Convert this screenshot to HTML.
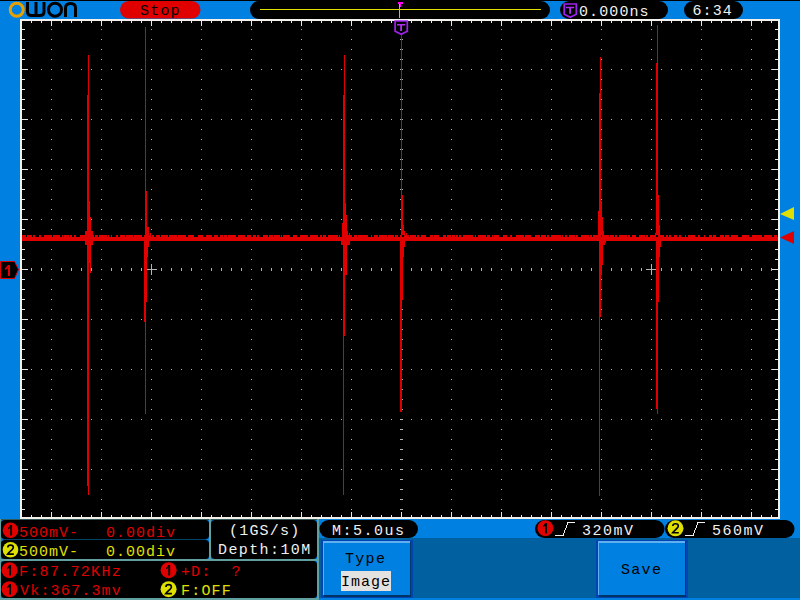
<!DOCTYPE html>
<html><head><meta charset="utf-8">
<style>
html,body{margin:0;padding:0;width:800px;height:600px;overflow:hidden;background:#0080e0;}
svg{position:absolute;left:0;top:0;display:block}
text{font-family:"Liberation Mono",monospace;font-size:15px;}
</style></head><body>
<svg width="800" height="600" viewBox="0 0 800 600" shape-rendering="crispEdges">
<rect x="0" y="0" width="800" height="600" fill="#0080e0"/>
<rect x="0" y="0" width="800" height="1" fill="#000"/>
<rect x="20" y="19" width="760" height="500" fill="#f4f0ec"/>
<rect x="22" y="21" width="756" height="496" fill="#000"/>
<path d="M31 21h1v2h-1zM31 515h1v2h-1zM41 21h1v2h-1zM41 515h1v2h-1zM51 21h1v5h-1zM51 512h1v5h-1zM61 21h1v2h-1zM61 515h1v2h-1zM71 21h1v2h-1zM71 515h1v2h-1zM81 21h1v2h-1zM81 515h1v2h-1zM91 21h1v2h-1zM91 515h1v2h-1zM101 21h1v5h-1zM101 512h1v5h-1zM111 21h1v2h-1zM111 515h1v2h-1zM121 21h1v2h-1zM121 515h1v2h-1zM131 21h1v2h-1zM131 515h1v2h-1zM141 21h1v2h-1zM141 515h1v2h-1zM151 21h1v5h-1zM151 512h1v5h-1zM161 21h1v2h-1zM161 515h1v2h-1zM171 21h1v2h-1zM171 515h1v2h-1zM181 21h1v2h-1zM181 515h1v2h-1zM191 21h1v2h-1zM191 515h1v2h-1zM201 21h1v5h-1zM201 512h1v5h-1zM211 21h1v2h-1zM211 515h1v2h-1zM221 21h1v2h-1zM221 515h1v2h-1zM231 21h1v2h-1zM231 515h1v2h-1zM241 21h1v2h-1zM241 515h1v2h-1zM251 21h1v5h-1zM251 512h1v5h-1zM261 21h1v2h-1zM261 515h1v2h-1zM271 21h1v2h-1zM271 515h1v2h-1zM281 21h1v2h-1zM281 515h1v2h-1zM291 21h1v2h-1zM291 515h1v2h-1zM301 21h1v5h-1zM301 512h1v5h-1zM311 21h1v2h-1zM311 515h1v2h-1zM321 21h1v2h-1zM321 515h1v2h-1zM331 21h1v2h-1zM331 515h1v2h-1zM341 21h1v2h-1zM341 515h1v2h-1zM351 21h1v5h-1zM351 512h1v5h-1zM361 21h1v2h-1zM361 515h1v2h-1zM371 21h1v2h-1zM371 515h1v2h-1zM381 21h1v2h-1zM381 515h1v2h-1zM391 21h1v2h-1zM391 515h1v2h-1zM401 21h1v5h-1zM401 512h1v5h-1zM411 21h1v2h-1zM411 515h1v2h-1zM421 21h1v2h-1zM421 515h1v2h-1zM431 21h1v2h-1zM431 515h1v2h-1zM441 21h1v2h-1zM441 515h1v2h-1zM451 21h1v5h-1zM451 512h1v5h-1zM461 21h1v2h-1zM461 515h1v2h-1zM471 21h1v2h-1zM471 515h1v2h-1zM481 21h1v2h-1zM481 515h1v2h-1zM491 21h1v2h-1zM491 515h1v2h-1zM501 21h1v5h-1zM501 512h1v5h-1zM511 21h1v2h-1zM511 515h1v2h-1zM521 21h1v2h-1zM521 515h1v2h-1zM531 21h1v2h-1zM531 515h1v2h-1zM541 21h1v2h-1zM541 515h1v2h-1zM551 21h1v5h-1zM551 512h1v5h-1zM561 21h1v2h-1zM561 515h1v2h-1zM571 21h1v2h-1zM571 515h1v2h-1zM581 21h1v2h-1zM581 515h1v2h-1zM591 21h1v2h-1zM591 515h1v2h-1zM601 21h1v5h-1zM601 512h1v5h-1zM611 21h1v2h-1zM611 515h1v2h-1zM621 21h1v2h-1zM621 515h1v2h-1zM631 21h1v2h-1zM631 515h1v2h-1zM641 21h1v2h-1zM641 515h1v2h-1zM651 21h1v5h-1zM651 512h1v5h-1zM661 21h1v2h-1zM661 515h1v2h-1zM671 21h1v2h-1zM671 515h1v2h-1zM681 21h1v2h-1zM681 515h1v2h-1zM691 21h1v2h-1zM691 515h1v2h-1zM701 21h1v5h-1zM701 512h1v5h-1zM711 21h1v2h-1zM711 515h1v2h-1zM721 21h1v2h-1zM721 515h1v2h-1zM731 21h1v2h-1zM731 515h1v2h-1zM741 21h1v2h-1zM741 515h1v2h-1zM751 21h1v5h-1zM751 512h1v5h-1zM761 21h1v2h-1zM761 515h1v2h-1zM771 21h1v2h-1zM771 515h1v2h-1zM22 29h3v1h-3zM775 29h3v1h-3zM22 39h3v1h-3zM775 39h3v1h-3zM22 49h3v1h-3zM775 49h3v1h-3zM22 59h3v1h-3zM775 59h3v1h-3zM22 69h6v1h-6zM772 69h6v1h-6zM22 79h3v1h-3zM775 79h3v1h-3zM22 89h3v1h-3zM775 89h3v1h-3zM22 99h3v1h-3zM775 99h3v1h-3zM22 109h3v1h-3zM775 109h3v1h-3zM22 119h6v1h-6zM772 119h6v1h-6zM22 129h3v1h-3zM775 129h3v1h-3zM22 139h3v1h-3zM775 139h3v1h-3zM22 149h3v1h-3zM775 149h3v1h-3zM22 159h3v1h-3zM775 159h3v1h-3zM22 169h6v1h-6zM772 169h6v1h-6zM22 179h3v1h-3zM775 179h3v1h-3zM22 189h3v1h-3zM775 189h3v1h-3zM22 199h3v1h-3zM775 199h3v1h-3zM22 209h3v1h-3zM775 209h3v1h-3zM22 219h6v1h-6zM772 219h6v1h-6zM22 229h3v1h-3zM775 229h3v1h-3zM22 239h3v1h-3zM775 239h3v1h-3zM22 249h3v1h-3zM775 249h3v1h-3zM22 259h3v1h-3zM775 259h3v1h-3zM22 269h6v1h-6zM772 269h6v1h-6zM22 279h3v1h-3zM775 279h3v1h-3zM22 289h3v1h-3zM775 289h3v1h-3zM22 299h3v1h-3zM775 299h3v1h-3zM22 309h3v1h-3zM775 309h3v1h-3zM22 319h6v1h-6zM772 319h6v1h-6zM22 329h3v1h-3zM775 329h3v1h-3zM22 339h3v1h-3zM775 339h3v1h-3zM22 349h3v1h-3zM775 349h3v1h-3zM22 359h3v1h-3zM775 359h3v1h-3zM22 369h6v1h-6zM772 369h6v1h-6zM22 379h3v1h-3zM775 379h3v1h-3zM22 389h3v1h-3zM775 389h3v1h-3zM22 399h3v1h-3zM775 399h3v1h-3zM22 409h3v1h-3zM775 409h3v1h-3zM22 419h6v1h-6zM772 419h6v1h-6zM22 429h3v1h-3zM775 429h3v1h-3zM22 439h3v1h-3zM775 439h3v1h-3zM22 449h3v1h-3zM775 449h3v1h-3zM22 459h3v1h-3zM775 459h3v1h-3zM22 469h6v1h-6zM772 469h6v1h-6zM22 479h3v1h-3zM775 479h3v1h-3zM22 489h3v1h-3zM775 489h3v1h-3zM22 499h3v1h-3zM775 499h3v1h-3zM22 509h3v1h-3zM775 509h3v1h-3z" fill="#e8e8e8"/>
<path d="M51 29h1v1h-1zM51 39h1v1h-1zM51 49h1v1h-1zM51 59h1v1h-1zM51 69h1v1h-1zM51 79h1v1h-1zM51 89h1v1h-1zM51 99h1v1h-1zM51 109h1v1h-1zM51 119h1v1h-1zM51 129h1v1h-1zM51 139h1v1h-1zM51 149h1v1h-1zM51 159h1v1h-1zM51 169h1v1h-1zM51 179h1v1h-1zM51 189h1v1h-1zM51 199h1v1h-1zM51 209h1v1h-1zM51 219h1v1h-1zM51 229h1v1h-1zM51 239h1v1h-1zM51 249h1v1h-1zM51 259h1v1h-1zM51 269h1v1h-1zM51 279h1v1h-1zM51 289h1v1h-1zM51 299h1v1h-1zM51 309h1v1h-1zM51 319h1v1h-1zM51 329h1v1h-1zM51 339h1v1h-1zM51 349h1v1h-1zM51 359h1v1h-1zM51 369h1v1h-1zM51 379h1v1h-1zM51 389h1v1h-1zM51 399h1v1h-1zM51 409h1v1h-1zM51 419h1v1h-1zM51 429h1v1h-1zM51 439h1v1h-1zM51 449h1v1h-1zM51 459h1v1h-1zM51 469h1v1h-1zM51 479h1v1h-1zM51 489h1v1h-1zM51 499h1v1h-1zM51 509h1v1h-1zM101 29h1v1h-1zM101 39h1v1h-1zM101 49h1v1h-1zM101 59h1v1h-1zM101 69h1v1h-1zM101 79h1v1h-1zM101 89h1v1h-1zM101 99h1v1h-1zM101 109h1v1h-1zM101 119h1v1h-1zM101 129h1v1h-1zM101 139h1v1h-1zM101 149h1v1h-1zM101 159h1v1h-1zM101 169h1v1h-1zM101 179h1v1h-1zM101 189h1v1h-1zM101 199h1v1h-1zM101 209h1v1h-1zM101 219h1v1h-1zM101 229h1v1h-1zM101 239h1v1h-1zM101 249h1v1h-1zM101 259h1v1h-1zM101 269h1v1h-1zM101 279h1v1h-1zM101 289h1v1h-1zM101 299h1v1h-1zM101 309h1v1h-1zM101 319h1v1h-1zM101 329h1v1h-1zM101 339h1v1h-1zM101 349h1v1h-1zM101 359h1v1h-1zM101 369h1v1h-1zM101 379h1v1h-1zM101 389h1v1h-1zM101 399h1v1h-1zM101 409h1v1h-1zM101 419h1v1h-1zM101 429h1v1h-1zM101 439h1v1h-1zM101 449h1v1h-1zM101 459h1v1h-1zM101 469h1v1h-1zM101 479h1v1h-1zM101 489h1v1h-1zM101 499h1v1h-1zM101 509h1v1h-1zM151 29h1v1h-1zM151 39h1v1h-1zM151 49h1v1h-1zM151 59h1v1h-1zM151 69h1v1h-1zM151 79h1v1h-1zM151 89h1v1h-1zM151 99h1v1h-1zM151 109h1v1h-1zM151 119h1v1h-1zM151 129h1v1h-1zM151 139h1v1h-1zM151 149h1v1h-1zM151 159h1v1h-1zM151 169h1v1h-1zM151 179h1v1h-1zM151 189h1v1h-1zM151 199h1v1h-1zM151 209h1v1h-1zM151 219h1v1h-1zM151 229h1v1h-1zM151 239h1v1h-1zM151 249h1v1h-1zM151 259h1v1h-1zM151 269h1v1h-1zM151 279h1v1h-1zM151 289h1v1h-1zM151 299h1v1h-1zM151 309h1v1h-1zM151 319h1v1h-1zM151 329h1v1h-1zM151 339h1v1h-1zM151 349h1v1h-1zM151 359h1v1h-1zM151 369h1v1h-1zM151 379h1v1h-1zM151 389h1v1h-1zM151 399h1v1h-1zM151 409h1v1h-1zM151 419h1v1h-1zM151 429h1v1h-1zM151 439h1v1h-1zM151 449h1v1h-1zM151 459h1v1h-1zM151 469h1v1h-1zM151 479h1v1h-1zM151 489h1v1h-1zM151 499h1v1h-1zM151 509h1v1h-1zM201 29h1v1h-1zM201 39h1v1h-1zM201 49h1v1h-1zM201 59h1v1h-1zM201 69h1v1h-1zM201 79h1v1h-1zM201 89h1v1h-1zM201 99h1v1h-1zM201 109h1v1h-1zM201 119h1v1h-1zM201 129h1v1h-1zM201 139h1v1h-1zM201 149h1v1h-1zM201 159h1v1h-1zM201 169h1v1h-1zM201 179h1v1h-1zM201 189h1v1h-1zM201 199h1v1h-1zM201 209h1v1h-1zM201 219h1v1h-1zM201 229h1v1h-1zM201 239h1v1h-1zM201 249h1v1h-1zM201 259h1v1h-1zM201 269h1v1h-1zM201 279h1v1h-1zM201 289h1v1h-1zM201 299h1v1h-1zM201 309h1v1h-1zM201 319h1v1h-1zM201 329h1v1h-1zM201 339h1v1h-1zM201 349h1v1h-1zM201 359h1v1h-1zM201 369h1v1h-1zM201 379h1v1h-1zM201 389h1v1h-1zM201 399h1v1h-1zM201 409h1v1h-1zM201 419h1v1h-1zM201 429h1v1h-1zM201 439h1v1h-1zM201 449h1v1h-1zM201 459h1v1h-1zM201 469h1v1h-1zM201 479h1v1h-1zM201 489h1v1h-1zM201 499h1v1h-1zM201 509h1v1h-1zM251 29h1v1h-1zM251 39h1v1h-1zM251 49h1v1h-1zM251 59h1v1h-1zM251 69h1v1h-1zM251 79h1v1h-1zM251 89h1v1h-1zM251 99h1v1h-1zM251 109h1v1h-1zM251 119h1v1h-1zM251 129h1v1h-1zM251 139h1v1h-1zM251 149h1v1h-1zM251 159h1v1h-1zM251 169h1v1h-1zM251 179h1v1h-1zM251 189h1v1h-1zM251 199h1v1h-1zM251 209h1v1h-1zM251 219h1v1h-1zM251 229h1v1h-1zM251 239h1v1h-1zM251 249h1v1h-1zM251 259h1v1h-1zM251 269h1v1h-1zM251 279h1v1h-1zM251 289h1v1h-1zM251 299h1v1h-1zM251 309h1v1h-1zM251 319h1v1h-1zM251 329h1v1h-1zM251 339h1v1h-1zM251 349h1v1h-1zM251 359h1v1h-1zM251 369h1v1h-1zM251 379h1v1h-1zM251 389h1v1h-1zM251 399h1v1h-1zM251 409h1v1h-1zM251 419h1v1h-1zM251 429h1v1h-1zM251 439h1v1h-1zM251 449h1v1h-1zM251 459h1v1h-1zM251 469h1v1h-1zM251 479h1v1h-1zM251 489h1v1h-1zM251 499h1v1h-1zM251 509h1v1h-1zM301 29h1v1h-1zM301 39h1v1h-1zM301 49h1v1h-1zM301 59h1v1h-1zM301 69h1v1h-1zM301 79h1v1h-1zM301 89h1v1h-1zM301 99h1v1h-1zM301 109h1v1h-1zM301 119h1v1h-1zM301 129h1v1h-1zM301 139h1v1h-1zM301 149h1v1h-1zM301 159h1v1h-1zM301 169h1v1h-1zM301 179h1v1h-1zM301 189h1v1h-1zM301 199h1v1h-1zM301 209h1v1h-1zM301 219h1v1h-1zM301 229h1v1h-1zM301 239h1v1h-1zM301 249h1v1h-1zM301 259h1v1h-1zM301 269h1v1h-1zM301 279h1v1h-1zM301 289h1v1h-1zM301 299h1v1h-1zM301 309h1v1h-1zM301 319h1v1h-1zM301 329h1v1h-1zM301 339h1v1h-1zM301 349h1v1h-1zM301 359h1v1h-1zM301 369h1v1h-1zM301 379h1v1h-1zM301 389h1v1h-1zM301 399h1v1h-1zM301 409h1v1h-1zM301 419h1v1h-1zM301 429h1v1h-1zM301 439h1v1h-1zM301 449h1v1h-1zM301 459h1v1h-1zM301 469h1v1h-1zM301 479h1v1h-1zM301 489h1v1h-1zM301 499h1v1h-1zM301 509h1v1h-1zM351 29h1v1h-1zM351 39h1v1h-1zM351 49h1v1h-1zM351 59h1v1h-1zM351 69h1v1h-1zM351 79h1v1h-1zM351 89h1v1h-1zM351 99h1v1h-1zM351 109h1v1h-1zM351 119h1v1h-1zM351 129h1v1h-1zM351 139h1v1h-1zM351 149h1v1h-1zM351 159h1v1h-1zM351 169h1v1h-1zM351 179h1v1h-1zM351 189h1v1h-1zM351 199h1v1h-1zM351 209h1v1h-1zM351 219h1v1h-1zM351 229h1v1h-1zM351 239h1v1h-1zM351 249h1v1h-1zM351 259h1v1h-1zM351 269h1v1h-1zM351 279h1v1h-1zM351 289h1v1h-1zM351 299h1v1h-1zM351 309h1v1h-1zM351 319h1v1h-1zM351 329h1v1h-1zM351 339h1v1h-1zM351 349h1v1h-1zM351 359h1v1h-1zM351 369h1v1h-1zM351 379h1v1h-1zM351 389h1v1h-1zM351 399h1v1h-1zM351 409h1v1h-1zM351 419h1v1h-1zM351 429h1v1h-1zM351 439h1v1h-1zM351 449h1v1h-1zM351 459h1v1h-1zM351 469h1v1h-1zM351 479h1v1h-1zM351 489h1v1h-1zM351 499h1v1h-1zM351 509h1v1h-1zM400 29h3v1h-3zM400 39h3v1h-3zM400 49h3v1h-3zM400 59h3v1h-3zM400 69h3v1h-3zM400 79h3v1h-3zM400 89h3v1h-3zM400 99h3v1h-3zM400 109h3v1h-3zM400 119h3v1h-3zM400 129h3v1h-3zM400 139h3v1h-3zM400 149h3v1h-3zM400 159h3v1h-3zM400 169h3v1h-3zM400 179h3v1h-3zM400 189h3v1h-3zM400 199h3v1h-3zM400 209h3v1h-3zM400 219h3v1h-3zM400 229h3v1h-3zM400 239h3v1h-3zM400 249h3v1h-3zM400 259h3v1h-3zM400 269h3v1h-3zM400 279h3v1h-3zM400 289h3v1h-3zM400 299h3v1h-3zM400 309h3v1h-3zM400 319h3v1h-3zM400 329h3v1h-3zM400 339h3v1h-3zM400 349h3v1h-3zM400 359h3v1h-3zM400 369h3v1h-3zM400 379h3v1h-3zM400 389h3v1h-3zM400 399h3v1h-3zM400 409h3v1h-3zM400 419h3v1h-3zM400 429h3v1h-3zM400 439h3v1h-3zM400 449h3v1h-3zM400 459h3v1h-3zM400 469h3v1h-3zM400 479h3v1h-3zM400 489h3v1h-3zM400 499h3v1h-3zM400 509h3v1h-3zM451 29h1v1h-1zM451 39h1v1h-1zM451 49h1v1h-1zM451 59h1v1h-1zM451 69h1v1h-1zM451 79h1v1h-1zM451 89h1v1h-1zM451 99h1v1h-1zM451 109h1v1h-1zM451 119h1v1h-1zM451 129h1v1h-1zM451 139h1v1h-1zM451 149h1v1h-1zM451 159h1v1h-1zM451 169h1v1h-1zM451 179h1v1h-1zM451 189h1v1h-1zM451 199h1v1h-1zM451 209h1v1h-1zM451 219h1v1h-1zM451 229h1v1h-1zM451 239h1v1h-1zM451 249h1v1h-1zM451 259h1v1h-1zM451 269h1v1h-1zM451 279h1v1h-1zM451 289h1v1h-1zM451 299h1v1h-1zM451 309h1v1h-1zM451 319h1v1h-1zM451 329h1v1h-1zM451 339h1v1h-1zM451 349h1v1h-1zM451 359h1v1h-1zM451 369h1v1h-1zM451 379h1v1h-1zM451 389h1v1h-1zM451 399h1v1h-1zM451 409h1v1h-1zM451 419h1v1h-1zM451 429h1v1h-1zM451 439h1v1h-1zM451 449h1v1h-1zM451 459h1v1h-1zM451 469h1v1h-1zM451 479h1v1h-1zM451 489h1v1h-1zM451 499h1v1h-1zM451 509h1v1h-1zM501 29h1v1h-1zM501 39h1v1h-1zM501 49h1v1h-1zM501 59h1v1h-1zM501 69h1v1h-1zM501 79h1v1h-1zM501 89h1v1h-1zM501 99h1v1h-1zM501 109h1v1h-1zM501 119h1v1h-1zM501 129h1v1h-1zM501 139h1v1h-1zM501 149h1v1h-1zM501 159h1v1h-1zM501 169h1v1h-1zM501 179h1v1h-1zM501 189h1v1h-1zM501 199h1v1h-1zM501 209h1v1h-1zM501 219h1v1h-1zM501 229h1v1h-1zM501 239h1v1h-1zM501 249h1v1h-1zM501 259h1v1h-1zM501 269h1v1h-1zM501 279h1v1h-1zM501 289h1v1h-1zM501 299h1v1h-1zM501 309h1v1h-1zM501 319h1v1h-1zM501 329h1v1h-1zM501 339h1v1h-1zM501 349h1v1h-1zM501 359h1v1h-1zM501 369h1v1h-1zM501 379h1v1h-1zM501 389h1v1h-1zM501 399h1v1h-1zM501 409h1v1h-1zM501 419h1v1h-1zM501 429h1v1h-1zM501 439h1v1h-1zM501 449h1v1h-1zM501 459h1v1h-1zM501 469h1v1h-1zM501 479h1v1h-1zM501 489h1v1h-1zM501 499h1v1h-1zM501 509h1v1h-1zM551 29h1v1h-1zM551 39h1v1h-1zM551 49h1v1h-1zM551 59h1v1h-1zM551 69h1v1h-1zM551 79h1v1h-1zM551 89h1v1h-1zM551 99h1v1h-1zM551 109h1v1h-1zM551 119h1v1h-1zM551 129h1v1h-1zM551 139h1v1h-1zM551 149h1v1h-1zM551 159h1v1h-1zM551 169h1v1h-1zM551 179h1v1h-1zM551 189h1v1h-1zM551 199h1v1h-1zM551 209h1v1h-1zM551 219h1v1h-1zM551 229h1v1h-1zM551 239h1v1h-1zM551 249h1v1h-1zM551 259h1v1h-1zM551 269h1v1h-1zM551 279h1v1h-1zM551 289h1v1h-1zM551 299h1v1h-1zM551 309h1v1h-1zM551 319h1v1h-1zM551 329h1v1h-1zM551 339h1v1h-1zM551 349h1v1h-1zM551 359h1v1h-1zM551 369h1v1h-1zM551 379h1v1h-1zM551 389h1v1h-1zM551 399h1v1h-1zM551 409h1v1h-1zM551 419h1v1h-1zM551 429h1v1h-1zM551 439h1v1h-1zM551 449h1v1h-1zM551 459h1v1h-1zM551 469h1v1h-1zM551 479h1v1h-1zM551 489h1v1h-1zM551 499h1v1h-1zM551 509h1v1h-1zM601 29h1v1h-1zM601 39h1v1h-1zM601 49h1v1h-1zM601 59h1v1h-1zM601 69h1v1h-1zM601 79h1v1h-1zM601 89h1v1h-1zM601 99h1v1h-1zM601 109h1v1h-1zM601 119h1v1h-1zM601 129h1v1h-1zM601 139h1v1h-1zM601 149h1v1h-1zM601 159h1v1h-1zM601 169h1v1h-1zM601 179h1v1h-1zM601 189h1v1h-1zM601 199h1v1h-1zM601 209h1v1h-1zM601 219h1v1h-1zM601 229h1v1h-1zM601 239h1v1h-1zM601 249h1v1h-1zM601 259h1v1h-1zM601 269h1v1h-1zM601 279h1v1h-1zM601 289h1v1h-1zM601 299h1v1h-1zM601 309h1v1h-1zM601 319h1v1h-1zM601 329h1v1h-1zM601 339h1v1h-1zM601 349h1v1h-1zM601 359h1v1h-1zM601 369h1v1h-1zM601 379h1v1h-1zM601 389h1v1h-1zM601 399h1v1h-1zM601 409h1v1h-1zM601 419h1v1h-1zM601 429h1v1h-1zM601 439h1v1h-1zM601 449h1v1h-1zM601 459h1v1h-1zM601 469h1v1h-1zM601 479h1v1h-1zM601 489h1v1h-1zM601 499h1v1h-1zM601 509h1v1h-1zM651 29h1v1h-1zM651 39h1v1h-1zM651 49h1v1h-1zM651 59h1v1h-1zM651 69h1v1h-1zM651 79h1v1h-1zM651 89h1v1h-1zM651 99h1v1h-1zM651 109h1v1h-1zM651 119h1v1h-1zM651 129h1v1h-1zM651 139h1v1h-1zM651 149h1v1h-1zM651 159h1v1h-1zM651 169h1v1h-1zM651 179h1v1h-1zM651 189h1v1h-1zM651 199h1v1h-1zM651 209h1v1h-1zM651 219h1v1h-1zM651 229h1v1h-1zM651 239h1v1h-1zM651 249h1v1h-1zM651 259h1v1h-1zM651 269h1v1h-1zM651 279h1v1h-1zM651 289h1v1h-1zM651 299h1v1h-1zM651 309h1v1h-1zM651 319h1v1h-1zM651 329h1v1h-1zM651 339h1v1h-1zM651 349h1v1h-1zM651 359h1v1h-1zM651 369h1v1h-1zM651 379h1v1h-1zM651 389h1v1h-1zM651 399h1v1h-1zM651 409h1v1h-1zM651 419h1v1h-1zM651 429h1v1h-1zM651 439h1v1h-1zM651 449h1v1h-1zM651 459h1v1h-1zM651 469h1v1h-1zM651 479h1v1h-1zM651 489h1v1h-1zM651 499h1v1h-1zM651 509h1v1h-1zM701 29h1v1h-1zM701 39h1v1h-1zM701 49h1v1h-1zM701 59h1v1h-1zM701 69h1v1h-1zM701 79h1v1h-1zM701 89h1v1h-1zM701 99h1v1h-1zM701 109h1v1h-1zM701 119h1v1h-1zM701 129h1v1h-1zM701 139h1v1h-1zM701 149h1v1h-1zM701 159h1v1h-1zM701 169h1v1h-1zM701 179h1v1h-1zM701 189h1v1h-1zM701 199h1v1h-1zM701 209h1v1h-1zM701 219h1v1h-1zM701 229h1v1h-1zM701 239h1v1h-1zM701 249h1v1h-1zM701 259h1v1h-1zM701 269h1v1h-1zM701 279h1v1h-1zM701 289h1v1h-1zM701 299h1v1h-1zM701 309h1v1h-1zM701 319h1v1h-1zM701 329h1v1h-1zM701 339h1v1h-1zM701 349h1v1h-1zM701 359h1v1h-1zM701 369h1v1h-1zM701 379h1v1h-1zM701 389h1v1h-1zM701 399h1v1h-1zM701 409h1v1h-1zM701 419h1v1h-1zM701 429h1v1h-1zM701 439h1v1h-1zM701 449h1v1h-1zM701 459h1v1h-1zM701 469h1v1h-1zM701 479h1v1h-1zM701 489h1v1h-1zM701 499h1v1h-1zM701 509h1v1h-1zM751 29h1v1h-1zM751 39h1v1h-1zM751 49h1v1h-1zM751 59h1v1h-1zM751 69h1v1h-1zM751 79h1v1h-1zM751 89h1v1h-1zM751 99h1v1h-1zM751 109h1v1h-1zM751 119h1v1h-1zM751 129h1v1h-1zM751 139h1v1h-1zM751 149h1v1h-1zM751 159h1v1h-1zM751 169h1v1h-1zM751 179h1v1h-1zM751 189h1v1h-1zM751 199h1v1h-1zM751 209h1v1h-1zM751 219h1v1h-1zM751 229h1v1h-1zM751 239h1v1h-1zM751 249h1v1h-1zM751 259h1v1h-1zM751 269h1v1h-1zM751 279h1v1h-1zM751 289h1v1h-1zM751 299h1v1h-1zM751 309h1v1h-1zM751 319h1v1h-1zM751 329h1v1h-1zM751 339h1v1h-1zM751 349h1v1h-1zM751 359h1v1h-1zM751 369h1v1h-1zM751 379h1v1h-1zM751 389h1v1h-1zM751 399h1v1h-1zM751 409h1v1h-1zM751 419h1v1h-1zM751 429h1v1h-1zM751 439h1v1h-1zM751 449h1v1h-1zM751 459h1v1h-1zM751 469h1v1h-1zM751 479h1v1h-1zM751 489h1v1h-1zM751 499h1v1h-1zM751 509h1v1h-1zM31 69h1v1h-1zM41 69h1v1h-1zM61 69h1v1h-1zM71 69h1v1h-1zM81 69h1v1h-1zM91 69h1v1h-1zM111 69h1v1h-1zM121 69h1v1h-1zM131 69h1v1h-1zM141 69h1v1h-1zM161 69h1v1h-1zM171 69h1v1h-1zM181 69h1v1h-1zM191 69h1v1h-1zM211 69h1v1h-1zM221 69h1v1h-1zM231 69h1v1h-1zM241 69h1v1h-1zM261 69h1v1h-1zM271 69h1v1h-1zM281 69h1v1h-1zM291 69h1v1h-1zM311 69h1v1h-1zM321 69h1v1h-1zM331 69h1v1h-1zM341 69h1v1h-1zM361 69h1v1h-1zM371 69h1v1h-1zM381 69h1v1h-1zM391 69h1v1h-1zM411 69h1v1h-1zM421 69h1v1h-1zM431 69h1v1h-1zM441 69h1v1h-1zM461 69h1v1h-1zM471 69h1v1h-1zM481 69h1v1h-1zM491 69h1v1h-1zM511 69h1v1h-1zM521 69h1v1h-1zM531 69h1v1h-1zM541 69h1v1h-1zM561 69h1v1h-1zM571 69h1v1h-1zM581 69h1v1h-1zM591 69h1v1h-1zM611 69h1v1h-1zM621 69h1v1h-1zM631 69h1v1h-1zM641 69h1v1h-1zM661 69h1v1h-1zM671 69h1v1h-1zM681 69h1v1h-1zM691 69h1v1h-1zM711 69h1v1h-1zM721 69h1v1h-1zM731 69h1v1h-1zM741 69h1v1h-1zM761 69h1v1h-1zM771 69h1v1h-1zM31 119h1v1h-1zM41 119h1v1h-1zM61 119h1v1h-1zM71 119h1v1h-1zM81 119h1v1h-1zM91 119h1v1h-1zM111 119h1v1h-1zM121 119h1v1h-1zM131 119h1v1h-1zM141 119h1v1h-1zM161 119h1v1h-1zM171 119h1v1h-1zM181 119h1v1h-1zM191 119h1v1h-1zM211 119h1v1h-1zM221 119h1v1h-1zM231 119h1v1h-1zM241 119h1v1h-1zM261 119h1v1h-1zM271 119h1v1h-1zM281 119h1v1h-1zM291 119h1v1h-1zM311 119h1v1h-1zM321 119h1v1h-1zM331 119h1v1h-1zM341 119h1v1h-1zM361 119h1v1h-1zM371 119h1v1h-1zM381 119h1v1h-1zM391 119h1v1h-1zM411 119h1v1h-1zM421 119h1v1h-1zM431 119h1v1h-1zM441 119h1v1h-1zM461 119h1v1h-1zM471 119h1v1h-1zM481 119h1v1h-1zM491 119h1v1h-1zM511 119h1v1h-1zM521 119h1v1h-1zM531 119h1v1h-1zM541 119h1v1h-1zM561 119h1v1h-1zM571 119h1v1h-1zM581 119h1v1h-1zM591 119h1v1h-1zM611 119h1v1h-1zM621 119h1v1h-1zM631 119h1v1h-1zM641 119h1v1h-1zM661 119h1v1h-1zM671 119h1v1h-1zM681 119h1v1h-1zM691 119h1v1h-1zM711 119h1v1h-1zM721 119h1v1h-1zM731 119h1v1h-1zM741 119h1v1h-1zM761 119h1v1h-1zM771 119h1v1h-1zM31 169h1v1h-1zM41 169h1v1h-1zM61 169h1v1h-1zM71 169h1v1h-1zM81 169h1v1h-1zM91 169h1v1h-1zM111 169h1v1h-1zM121 169h1v1h-1zM131 169h1v1h-1zM141 169h1v1h-1zM161 169h1v1h-1zM171 169h1v1h-1zM181 169h1v1h-1zM191 169h1v1h-1zM211 169h1v1h-1zM221 169h1v1h-1zM231 169h1v1h-1zM241 169h1v1h-1zM261 169h1v1h-1zM271 169h1v1h-1zM281 169h1v1h-1zM291 169h1v1h-1zM311 169h1v1h-1zM321 169h1v1h-1zM331 169h1v1h-1zM341 169h1v1h-1zM361 169h1v1h-1zM371 169h1v1h-1zM381 169h1v1h-1zM391 169h1v1h-1zM411 169h1v1h-1zM421 169h1v1h-1zM431 169h1v1h-1zM441 169h1v1h-1zM461 169h1v1h-1zM471 169h1v1h-1zM481 169h1v1h-1zM491 169h1v1h-1zM511 169h1v1h-1zM521 169h1v1h-1zM531 169h1v1h-1zM541 169h1v1h-1zM561 169h1v1h-1zM571 169h1v1h-1zM581 169h1v1h-1zM591 169h1v1h-1zM611 169h1v1h-1zM621 169h1v1h-1zM631 169h1v1h-1zM641 169h1v1h-1zM661 169h1v1h-1zM671 169h1v1h-1zM681 169h1v1h-1zM691 169h1v1h-1zM711 169h1v1h-1zM721 169h1v1h-1zM731 169h1v1h-1zM741 169h1v1h-1zM761 169h1v1h-1zM771 169h1v1h-1zM31 219h1v1h-1zM41 219h1v1h-1zM61 219h1v1h-1zM71 219h1v1h-1zM81 219h1v1h-1zM91 219h1v1h-1zM111 219h1v1h-1zM121 219h1v1h-1zM131 219h1v1h-1zM141 219h1v1h-1zM161 219h1v1h-1zM171 219h1v1h-1zM181 219h1v1h-1zM191 219h1v1h-1zM211 219h1v1h-1zM221 219h1v1h-1zM231 219h1v1h-1zM241 219h1v1h-1zM261 219h1v1h-1zM271 219h1v1h-1zM281 219h1v1h-1zM291 219h1v1h-1zM311 219h1v1h-1zM321 219h1v1h-1zM331 219h1v1h-1zM341 219h1v1h-1zM361 219h1v1h-1zM371 219h1v1h-1zM381 219h1v1h-1zM391 219h1v1h-1zM411 219h1v1h-1zM421 219h1v1h-1zM431 219h1v1h-1zM441 219h1v1h-1zM461 219h1v1h-1zM471 219h1v1h-1zM481 219h1v1h-1zM491 219h1v1h-1zM511 219h1v1h-1zM521 219h1v1h-1zM531 219h1v1h-1zM541 219h1v1h-1zM561 219h1v1h-1zM571 219h1v1h-1zM581 219h1v1h-1zM591 219h1v1h-1zM611 219h1v1h-1zM621 219h1v1h-1zM631 219h1v1h-1zM641 219h1v1h-1zM661 219h1v1h-1zM671 219h1v1h-1zM681 219h1v1h-1zM691 219h1v1h-1zM711 219h1v1h-1zM721 219h1v1h-1zM731 219h1v1h-1zM741 219h1v1h-1zM761 219h1v1h-1zM771 219h1v1h-1zM31 268h1v3h-1zM41 268h1v3h-1zM61 268h1v3h-1zM71 268h1v3h-1zM81 268h1v3h-1zM91 268h1v3h-1zM111 268h1v3h-1zM121 268h1v3h-1zM131 268h1v3h-1zM141 268h1v3h-1zM161 268h1v3h-1zM171 268h1v3h-1zM181 268h1v3h-1zM191 268h1v3h-1zM211 268h1v3h-1zM221 268h1v3h-1zM231 268h1v3h-1zM241 268h1v3h-1zM261 268h1v3h-1zM271 268h1v3h-1zM281 268h1v3h-1zM291 268h1v3h-1zM311 268h1v3h-1zM321 268h1v3h-1zM331 268h1v3h-1zM341 268h1v3h-1zM361 268h1v3h-1zM371 268h1v3h-1zM381 268h1v3h-1zM391 268h1v3h-1zM411 268h1v3h-1zM421 268h1v3h-1zM431 268h1v3h-1zM441 268h1v3h-1zM461 268h1v3h-1zM471 268h1v3h-1zM481 268h1v3h-1zM491 268h1v3h-1zM511 268h1v3h-1zM521 268h1v3h-1zM531 268h1v3h-1zM541 268h1v3h-1zM561 268h1v3h-1zM571 268h1v3h-1zM581 268h1v3h-1zM591 268h1v3h-1zM611 268h1v3h-1zM621 268h1v3h-1zM631 268h1v3h-1zM641 268h1v3h-1zM661 268h1v3h-1zM671 268h1v3h-1zM681 268h1v3h-1zM691 268h1v3h-1zM711 268h1v3h-1zM721 268h1v3h-1zM731 268h1v3h-1zM741 268h1v3h-1zM761 268h1v3h-1zM771 268h1v3h-1zM31 319h1v1h-1zM41 319h1v1h-1zM61 319h1v1h-1zM71 319h1v1h-1zM81 319h1v1h-1zM91 319h1v1h-1zM111 319h1v1h-1zM121 319h1v1h-1zM131 319h1v1h-1zM141 319h1v1h-1zM161 319h1v1h-1zM171 319h1v1h-1zM181 319h1v1h-1zM191 319h1v1h-1zM211 319h1v1h-1zM221 319h1v1h-1zM231 319h1v1h-1zM241 319h1v1h-1zM261 319h1v1h-1zM271 319h1v1h-1zM281 319h1v1h-1zM291 319h1v1h-1zM311 319h1v1h-1zM321 319h1v1h-1zM331 319h1v1h-1zM341 319h1v1h-1zM361 319h1v1h-1zM371 319h1v1h-1zM381 319h1v1h-1zM391 319h1v1h-1zM411 319h1v1h-1zM421 319h1v1h-1zM431 319h1v1h-1zM441 319h1v1h-1zM461 319h1v1h-1zM471 319h1v1h-1zM481 319h1v1h-1zM491 319h1v1h-1zM511 319h1v1h-1zM521 319h1v1h-1zM531 319h1v1h-1zM541 319h1v1h-1zM561 319h1v1h-1zM571 319h1v1h-1zM581 319h1v1h-1zM591 319h1v1h-1zM611 319h1v1h-1zM621 319h1v1h-1zM631 319h1v1h-1zM641 319h1v1h-1zM661 319h1v1h-1zM671 319h1v1h-1zM681 319h1v1h-1zM691 319h1v1h-1zM711 319h1v1h-1zM721 319h1v1h-1zM731 319h1v1h-1zM741 319h1v1h-1zM761 319h1v1h-1zM771 319h1v1h-1zM31 369h1v1h-1zM41 369h1v1h-1zM61 369h1v1h-1zM71 369h1v1h-1zM81 369h1v1h-1zM91 369h1v1h-1zM111 369h1v1h-1zM121 369h1v1h-1zM131 369h1v1h-1zM141 369h1v1h-1zM161 369h1v1h-1zM171 369h1v1h-1zM181 369h1v1h-1zM191 369h1v1h-1zM211 369h1v1h-1zM221 369h1v1h-1zM231 369h1v1h-1zM241 369h1v1h-1zM261 369h1v1h-1zM271 369h1v1h-1zM281 369h1v1h-1zM291 369h1v1h-1zM311 369h1v1h-1zM321 369h1v1h-1zM331 369h1v1h-1zM341 369h1v1h-1zM361 369h1v1h-1zM371 369h1v1h-1zM381 369h1v1h-1zM391 369h1v1h-1zM411 369h1v1h-1zM421 369h1v1h-1zM431 369h1v1h-1zM441 369h1v1h-1zM461 369h1v1h-1zM471 369h1v1h-1zM481 369h1v1h-1zM491 369h1v1h-1zM511 369h1v1h-1zM521 369h1v1h-1zM531 369h1v1h-1zM541 369h1v1h-1zM561 369h1v1h-1zM571 369h1v1h-1zM581 369h1v1h-1zM591 369h1v1h-1zM611 369h1v1h-1zM621 369h1v1h-1zM631 369h1v1h-1zM641 369h1v1h-1zM661 369h1v1h-1zM671 369h1v1h-1zM681 369h1v1h-1zM691 369h1v1h-1zM711 369h1v1h-1zM721 369h1v1h-1zM731 369h1v1h-1zM741 369h1v1h-1zM761 369h1v1h-1zM771 369h1v1h-1zM31 419h1v1h-1zM41 419h1v1h-1zM61 419h1v1h-1zM71 419h1v1h-1zM81 419h1v1h-1zM91 419h1v1h-1zM111 419h1v1h-1zM121 419h1v1h-1zM131 419h1v1h-1zM141 419h1v1h-1zM161 419h1v1h-1zM171 419h1v1h-1zM181 419h1v1h-1zM191 419h1v1h-1zM211 419h1v1h-1zM221 419h1v1h-1zM231 419h1v1h-1zM241 419h1v1h-1zM261 419h1v1h-1zM271 419h1v1h-1zM281 419h1v1h-1zM291 419h1v1h-1zM311 419h1v1h-1zM321 419h1v1h-1zM331 419h1v1h-1zM341 419h1v1h-1zM361 419h1v1h-1zM371 419h1v1h-1zM381 419h1v1h-1zM391 419h1v1h-1zM411 419h1v1h-1zM421 419h1v1h-1zM431 419h1v1h-1zM441 419h1v1h-1zM461 419h1v1h-1zM471 419h1v1h-1zM481 419h1v1h-1zM491 419h1v1h-1zM511 419h1v1h-1zM521 419h1v1h-1zM531 419h1v1h-1zM541 419h1v1h-1zM561 419h1v1h-1zM571 419h1v1h-1zM581 419h1v1h-1zM591 419h1v1h-1zM611 419h1v1h-1zM621 419h1v1h-1zM631 419h1v1h-1zM641 419h1v1h-1zM661 419h1v1h-1zM671 419h1v1h-1zM681 419h1v1h-1zM691 419h1v1h-1zM711 419h1v1h-1zM721 419h1v1h-1zM731 419h1v1h-1zM741 419h1v1h-1zM761 419h1v1h-1zM771 419h1v1h-1zM31 469h1v1h-1zM41 469h1v1h-1zM61 469h1v1h-1zM71 469h1v1h-1zM81 469h1v1h-1zM91 469h1v1h-1zM111 469h1v1h-1zM121 469h1v1h-1zM131 469h1v1h-1zM141 469h1v1h-1zM161 469h1v1h-1zM171 469h1v1h-1zM181 469h1v1h-1zM191 469h1v1h-1zM211 469h1v1h-1zM221 469h1v1h-1zM231 469h1v1h-1zM241 469h1v1h-1zM261 469h1v1h-1zM271 469h1v1h-1zM281 469h1v1h-1zM291 469h1v1h-1zM311 469h1v1h-1zM321 469h1v1h-1zM331 469h1v1h-1zM341 469h1v1h-1zM361 469h1v1h-1zM371 469h1v1h-1zM381 469h1v1h-1zM391 469h1v1h-1zM411 469h1v1h-1zM421 469h1v1h-1zM431 469h1v1h-1zM441 469h1v1h-1zM461 469h1v1h-1zM471 469h1v1h-1zM481 469h1v1h-1zM491 469h1v1h-1zM511 469h1v1h-1zM521 469h1v1h-1zM531 469h1v1h-1zM541 469h1v1h-1zM561 469h1v1h-1zM571 469h1v1h-1zM581 469h1v1h-1zM591 469h1v1h-1zM611 469h1v1h-1zM621 469h1v1h-1zM631 469h1v1h-1zM641 469h1v1h-1zM661 469h1v1h-1zM671 469h1v1h-1zM681 469h1v1h-1zM691 469h1v1h-1zM711 469h1v1h-1zM721 469h1v1h-1zM731 469h1v1h-1zM741 469h1v1h-1zM761 469h1v1h-1zM771 469h1v1h-1zM146 269h11v1h-11z M151 264h1v11h-1zM646 269h11v1h-11z M651 264h1v11h-1z" fill="#b4b4b4"/>
<path d="M22 237h756v4h-756zM22 235h4v2h-4zM27 235h5v2h-5zM33 235h2v2h-2zM39 235h2v2h-2zM44 235h8v2h-8zM53 235h7v2h-7zM62 235h1v2h-1zM64 235h5v2h-5zM70 235h2v2h-2zM74 235h2v2h-2zM80 235h5v2h-5zM86 235h8v2h-8zM95 235h3v2h-3zM99 235h8v2h-8zM108 235h1v2h-1zM111 235h1v2h-1zM116 235h2v2h-2zM120 235h5v2h-5zM126 235h7v2h-7zM134 235h8v2h-8zM144 235h7v2h-7zM152 235h2v2h-2zM156 235h4v2h-4zM161 235h7v2h-7zM169 235h8v2h-8zM178 235h8v2h-8zM188 235h6v2h-6zM198 235h5v2h-5zM206 235h6v2h-6zM214 235h4v2h-4zM220 235h3v2h-3zM224 235h3v2h-3zM228 235h8v2h-8zM238 235h7v2h-7zM247 235h4v2h-4zM253 235h3v2h-3zM257 235h2v2h-2zM263 235h5v2h-5zM269 235h4v2h-4zM274 235h6v2h-6zM281 235h1v2h-1zM283 235h7v2h-7zM293 235h4v2h-4zM300 235h8v2h-8zM310 235h8v2h-8zM320 235h2v2h-2zM323 235h3v2h-3zM328 235h10v2h-10zM339 235h1v2h-1zM342 235h10v2h-10zM354 235h3v2h-3zM358 235h10v2h-10zM371 235h1v2h-1zM374 235h4v2h-4zM379 235h8v2h-8zM388 235h6v2h-6zM395 235h3v2h-3zM400 235h2v2h-2zM404 235h5v2h-5zM410 235h6v2h-6zM417 235h2v2h-2zM421 235h5v2h-5zM430 235h3v2h-3zM434 235h5v2h-5zM443 235h3v2h-3zM447 235h4v2h-4zM452 235h3v2h-3zM456 235h2v2h-2zM459 235h2v2h-2zM463 235h10v2h-10zM475 235h1v2h-1zM478 235h8v2h-8zM487 235h3v2h-3zM492 235h1v2h-1zM494 235h5v2h-5zM503 235h4v2h-4zM510 235h2v2h-2zM516 235h8v2h-8zM525 235h6v2h-6zM535 235h5v2h-5zM541 235h5v2h-5zM547 235h2v2h-2zM551 235h10v2h-10zM562 235h1v2h-1zM565 235h2v2h-2zM569 235h6v2h-6zM576 235h2v2h-2zM581 235h8v2h-8zM590 235h2v2h-2zM593 235h8v2h-8zM602 235h7v2h-7zM610 235h4v2h-4zM615 235h2v2h-2zM619 235h8v2h-8zM628 235h2v2h-2zM632 235h4v2h-4zM639 235h6v2h-6zM646 235h2v2h-2zM650 235h6v2h-6zM658 235h6v2h-6zM666 235h2v2h-2zM669 235h2v2h-2zM674 235h3v2h-3zM679 235h2v2h-2zM685 235h1v2h-1zM688 235h7v2h-7zM698 235h2v2h-2zM704 235h1v2h-1zM709 235h3v2h-3zM713 235h3v2h-3zM720 235h4v2h-4zM725 235h4v2h-4zM731 235h7v2h-7zM742 235h7v2h-7zM752 235h10v2h-10zM764 235h8v2h-8zM774 235h3v2h-3zM88 55h1v40h-1zM87 95h2v106h-2zM87 201h3v16h-3zM87 217h4v14h-4zM85 231h8v4h-8zM85 235h8v6h-8zM85 241h8v4h-8zM87 245h4v18h-4zM87 263h2v10h-2zM90 263h1v10h-1zM87 273h2v213h-2zM88 486h1v9h-1zM145 27h1v164h-1zM145 191h2v36h-2zM145 227h4v8h-4zM150 233h1v2h-1zM144 235h5v6h-5zM144 241h5v6h-5zM144 247h4v10h-4zM144 257h3v45h-3zM144 302h2v20h-2zM145 322h1v92h-1zM344 55h1v40h-1zM343 95h2v108h-2zM343 203h3v12h-3zM343 215h4v8h-4zM342 223h5v8h-5zM342 231h6v4h-6zM349 233h1v2h-1zM341 241h9v4h-9zM343 245h4v28h-4zM345 273h2v2h-2zM343 273h2v63h-2zM343 336h1v159h-1zM401 23h1v172h-1zM401 195h2v30h-2zM401 225h3v6h-3zM401 231h4v4h-4zM406 233h1v2h-1zM400 241h5v6h-5zM400 247h4v10h-4zM400 257h3v43h-3zM400 300h2v112h-2zM600 57h1v36h-1zM599 93h2v108h-2zM599 201h3v10h-3zM598 211h4v6h-4zM598 217h5v14h-5zM598 231h6v4h-6zM599 241h7v2h-7zM599 243h6v2h-6zM599 245h4v20h-4zM599 265h3v10h-3zM599 275h2v42h-2zM599 317h1v179h-1zM657 25h1v38h-1zM656 63h2v132h-2zM656 195h3v30h-3zM656 225h4v8h-4zM655 233h5v2h-5zM656 241h5v6h-5zM656 247h4v10h-4zM656 257h3v45h-3zM656 302h2v107h-2zM657 409h1v5h-1z" fill="#e00000"/>
<!-- top bar -->
<g shape-rendering="geometricPrecision">
<circle cx="16.75" cy="9.75" r="6.5" fill="none" stroke="#e8a000" stroke-width="3"/>
<path d="M27.5 2V11.5Q27.5 15.5 31.5 15.5H40Q44 15.5 44 11.5V2M36 2V15" fill="none" stroke="#000" stroke-width="3"/>
<circle cx="55" cy="9.75" r="6.5" fill="none" stroke="#000" stroke-width="3"/>
<path d="M65.5 17V8Q65.5 3.5 70.5 3.5Q75.5 3.5 75.5 8V17" fill="none" stroke="#000" stroke-width="3"/>
<rect x="120" y="1" width="80.5" height="17.5" rx="8.75" fill="#e00000"/>
<rect x="250" y="1" width="300" height="18" rx="9" fill="#000"/>
<rect x="560" y="1" width="108" height="18" rx="9" fill="#000"/>
<rect x="684" y="1" width="59" height="18" rx="9" fill="#000"/>
</g>
<rect x="260" y="9" width="281" height="1" fill="#e0e000"/>
<rect x="399" y="4" width="1" height="14" fill="#b0b0b0"/>
<path d="M398 2h5v2h-5zM400 4h1v3h-1z" fill="#ff00ff"/>
<text x="140" y="14.5" fill="#000" letter-spacing="1.2">Stop</text>
<text x="579" y="15.5" fill="#f0f0f0" letter-spacing="1.1">0.000ns</text>
<text x="692.5" y="14.8" fill="#f0f0f0" letter-spacing="1.1">6:34</text>
<!-- T shields -->
<g shape-rendering="geometricPrecision">
<path d="M395.1 21H407.3V31.3L401.2 34.3L395.1 31.3Z" fill="#000" stroke="#a020f0" stroke-width="1.7"/>
<path d="M397 24h8.2v1.4h-3.2v5.6h-1.8v-5.6h-3.2z" fill="#b030f0"/>
<path d="M564.2 4H576.3V14.3L570.2 17.3L564.2 14.3Z" fill="#000" stroke="#a020f0" stroke-width="1.7"/>
<path d="M566 6.8h8.2v1.4h-3.2v5.6h-1.8v-5.6h-3.2z" fill="#b030f0"/>
</g>
<!-- ch1 marker left -->
<path d="M0.5 261.5H14.5L18.5 269.5L14.5 278.5H0.5Z" fill="#000" stroke="#e00000" stroke-width="1" shape-rendering="geometricPrecision"/>
<rect x="8" y="265" width="2" height="11" fill="#e00000"/><path d="M5.3 269.6L8.6 265.6" stroke="#e00000" stroke-width="1.6" shape-rendering="geometricPrecision"/>
<!-- right triangles -->
<path d="M780 214L794 207V220Z" fill="#e0e000" shape-rendering="geometricPrecision"/>
<path d="M780 237.5L794 231V244Z" fill="#e00000" shape-rendering="geometricPrecision"/>
<!-- bottom panel -->
<rect x="319" y="538" width="481" height="60" fill="#0060a0"/>
<g shape-rendering="geometricPrecision">
<rect x="1" y="520" width="208" height="19" rx="3.5" fill="#000"/>
<rect x="1" y="540" width="208" height="19" rx="3.5" fill="#000"/>
<rect x="211" y="520" width="106" height="39" rx="4" fill="#000"/>
<rect x="1" y="561" width="316" height="37" rx="3.5" fill="#000"/>
<rect x="319.5" y="520" width="98.5" height="18" rx="9" fill="#000"/>
<rect x="535" y="520" width="129.5" height="18" rx="9" fill="#000"/>
<rect x="665" y="520" width="129.5" height="18" rx="9" fill="#000"/>
</g>
<rect x="3" y="539" width="203" height="1" fill="#004468"/>
<rect x="0" y="519" width="319" height="1" fill="#305858"/>
<rect x="0" y="519" width="1" height="81" fill="#60a0a0"/>
<rect x="0" y="559" width="319" height="2" fill="#60a0a0"/>
<rect x="209" y="519" width="2" height="41" fill="#60a0a0"/>
<rect x="317" y="519" width="2" height="81" fill="#60a0a0"/>
<rect x="0" y="598" width="319" height="2" fill="#60a0a0"/>
<!-- buttons -->
<rect x="321" y="540" width="92" height="58" fill="#0044b4"/><rect x="323" y="541" width="87" height="54" fill="#60b0f0"/><rect x="324" y="543" width="86" height="52" fill="#0080e0"/><rect x="410" y="542" width="1" height="55" fill="#003464"/><rect x="324" y="595" width="87" height="2" fill="#003464"/>
<rect x="596" y="540" width="92" height="58" fill="#0044b4"/><rect x="598" y="541" width="87" height="54" fill="#60b0f0"/><rect x="599" y="543" width="86" height="52" fill="#0080e0"/><rect x="685" y="542" width="1" height="55" fill="#003464"/><rect x="599" y="595" width="87" height="2" fill="#003464"/>
<rect x="341" y="571" width="50" height="20" fill="#e4e2e0"/>
<text x="345" y="562.5" fill="#000" letter-spacing="1.3">Type</text>
<text x="341" y="586" fill="#000" letter-spacing="1">Image</text>
<text x="621" y="574" fill="#000" letter-spacing="1.3">Save</text>
<g shape-rendering="geometricPrecision"><circle cx="10.5" cy="530.2" r="7.8" fill="#e00000"/><path d="M11.1 525.0V535.5" stroke="#000" stroke-width="1.9" fill="none"/><path d="M8.1 528.6Q9.7 528.0 10.8 525.2" stroke="#000" stroke-width="1.4" fill="none"/><circle cx="10.5" cy="549.7" r="7.8" fill="#e0e000"/><path d="M7.8 547.4000000000001C7.8 544.4000000000001 13.3 544.4000000000001 13.3 547.4000000000001C13.3 549.4000000000001 9.0 552.0 7.6 554.1H13.8" stroke="#000" stroke-width="1.6" fill="none"/><circle cx="9.5" cy="570.2" r="8" fill="#e00000"/><path d="M10.1 565.0V575.5" stroke="#000" stroke-width="1.9" fill="none"/><path d="M7.1 568.6Q8.7 568.0 9.8 565.2" stroke="#000" stroke-width="1.4" fill="none"/><circle cx="9.5" cy="589.2" r="8" fill="#e00000"/><path d="M10.1 584.0V594.5" stroke="#000" stroke-width="1.9" fill="none"/><path d="M7.1 587.6Q8.7 587.0 9.8 584.2" stroke="#000" stroke-width="1.4" fill="none"/><circle cx="168.6" cy="570.2" r="8" fill="#e00000"/><path d="M169.2 565.0V575.5" stroke="#000" stroke-width="1.9" fill="none"/><path d="M166.2 568.6Q167.79999999999998 568.0 168.9 565.2" stroke="#000" stroke-width="1.4" fill="none"/><circle cx="168.6" cy="589.2" r="8" fill="#e0e000"/><path d="M165.9 586.9000000000001C165.9 583.9000000000001 171.4 583.9000000000001 171.4 586.9000000000001C171.4 588.9000000000001 167.1 591.5 165.7 593.6H171.9" stroke="#000" stroke-width="1.6" fill="none"/><circle cx="545.4" cy="528.2" r="8" fill="#e00000"/><path d="M546.0 523.0V533.5" stroke="#000" stroke-width="1.9" fill="none"/><path d="M543.0 526.6Q544.6 526.0 545.6999999999999 523.2" stroke="#000" stroke-width="1.4" fill="none"/><circle cx="675.5" cy="528.3" r="8" fill="#e0e000"/><path d="M672.8 526.0C672.8 523.0 678.3 523.0 678.3 526.0C678.3 528.0 674.0 530.5999999999999 672.6 532.6999999999999H678.8" stroke="#000" stroke-width="1.6" fill="none"/></g>
<text x="19" y="536.5" fill="#e00000" letter-spacing="1">500mV-</text>
<text x="106" y="536.5" fill="#e00000" letter-spacing="1">0.00div</text>
<text x="19" y="555.5" fill="#e0e000" letter-spacing="1">500mV-</text>
<text x="106" y="555.5" fill="#e0e000" letter-spacing="1">0.00div</text>
<text x="229" y="535" fill="#f0f0f0" letter-spacing="1.2">(1GS/s)</text>
<text x="218" y="553.5" fill="#f0f0f0" letter-spacing="1.4">Depth:10M</text>
<text x="19" y="575.5" fill="#e00000" letter-spacing="1.3">F:87.72KHz</text>
<text x="20" y="594.5" fill="#e00000" letter-spacing="1.2">Vk:367.3mv</text>
<text x="181" y="575.5" fill="#e00000" letter-spacing="1.1" xml:space="preserve">+D:  ?</text>
<text x="181" y="594.5" fill="#e0e000" letter-spacing="1.2">F:OFF</text>
<text x="332" y="534.5" fill="#f0f0f0" letter-spacing="1.5">M:5.0us</text>
<text x="582" y="535" fill="#f0f0f0" letter-spacing="1.5">320mV</text>
<text x="712" y="535" fill="#f0f0f0" letter-spacing="1.5">560mV</text>
<path d="M555 535.5H563L568 522.5H575" fill="none" stroke="#f0f0f0" stroke-width="1"/>
<path d="M685 535.5H693L698 522.5H705" fill="none" stroke="#f0f0f0" stroke-width="1"/>

</svg>
</body></html>
